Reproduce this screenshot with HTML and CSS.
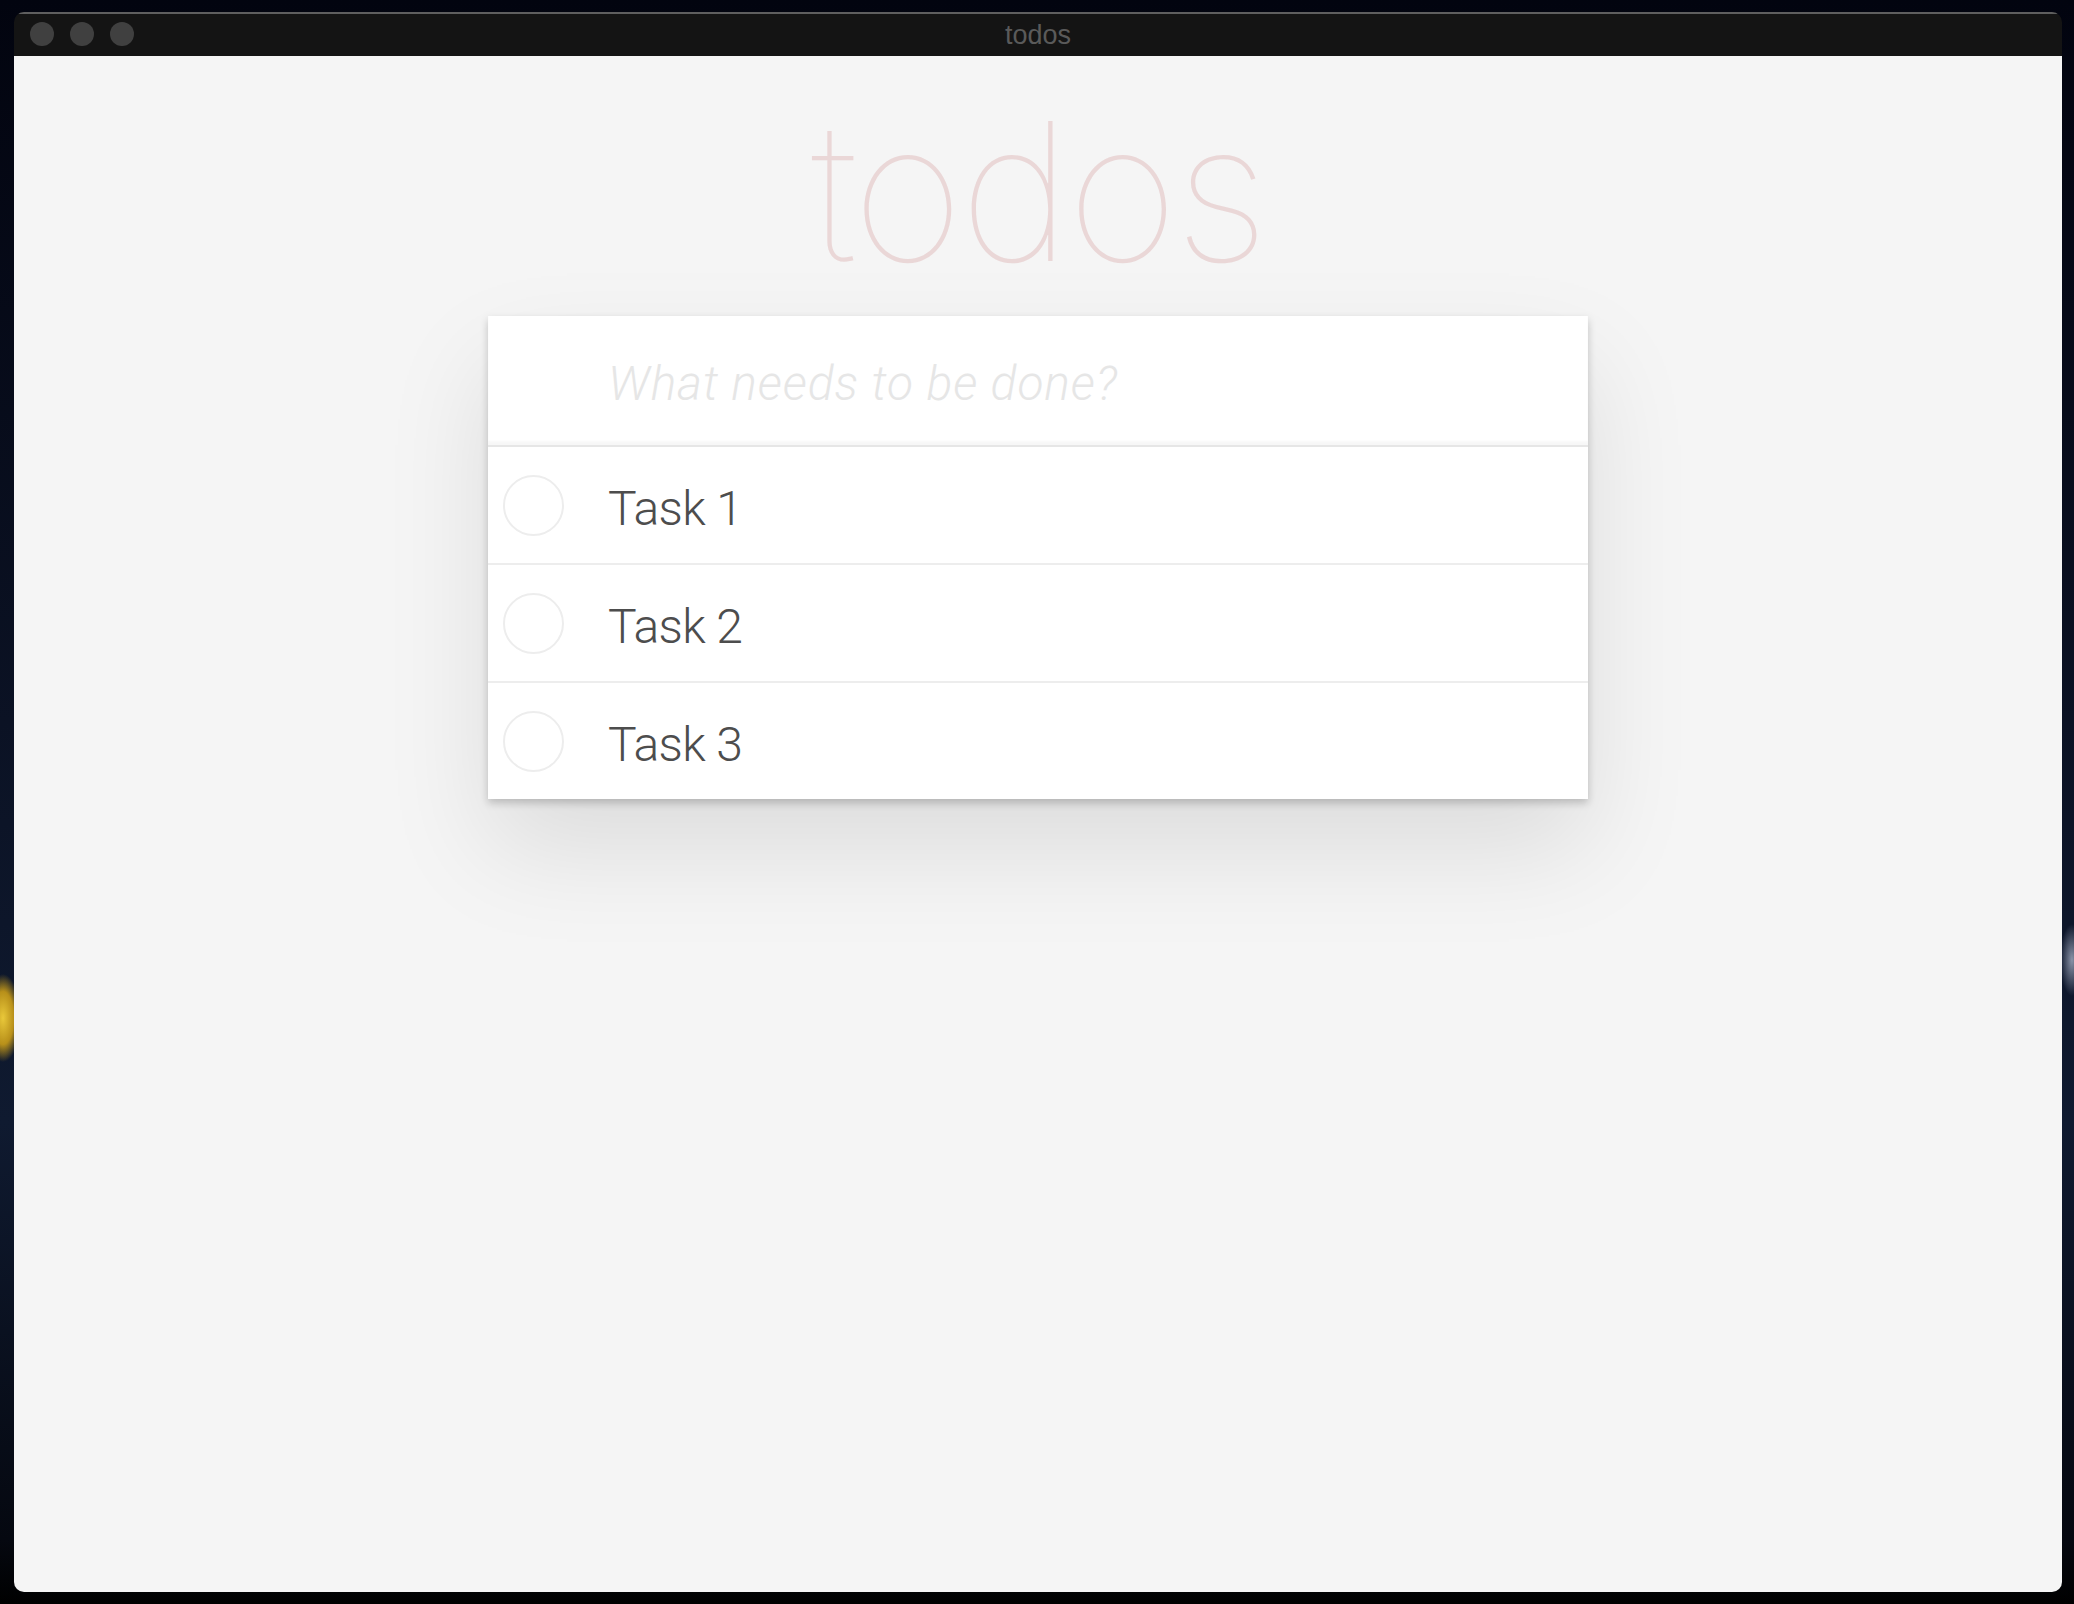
FILE: index.html
```html
<!DOCTYPE html>
<html lang="en">
<head>
<meta charset="utf-8">
<title>todos</title>
<link rel="stylesheet" href="styles.css">
</head>
<body>
<div class="window">
  <div class="titlebar">
    <div class="lights">
      <span class="light"></span>
      <span class="light"></span>
      <span class="light"></span>
    </div>
    <div class="wintitle">todos</div>
  </div>
  <div class="content">
    <section class="todoapp">
      <header class="header">
        <h1 class="logo">todos</h1>
      </header>
      <div class="card">
        <input class="new-todo" type="text" placeholder="What needs to be done?">
        <ul class="todo-list">
          <li class="todo"><span class="toggle"></span><label class="label">Task 1</label></li>
          <li class="todo"><span class="toggle"></span><label class="label">Task 2</label></li>
          <li class="todo"><span class="toggle"></span><label class="label">Task 3</label></li>
        </ul>
      </div>
    </section>
  </div>
</div>
</body>
</html>
```

FILE: styles.css
```css
html, body {
  margin: 0;
  padding: 0;
}

body {
  width: 2074px;
  height: 1604px;
  box-sizing: border-box;
  padding: 12px 12px 0 14px;
  overflow: hidden;
  background:
    radial-gradient(ellipse 18px 44px at 3px 1018px, #e9c83a 0%, #b8901a 60%, rgba(160,120,20,0) 100%),
    radial-gradient(ellipse 12px 36px at 2072px 960px, #8a93a8 0%, rgba(120,130,150,0) 100%),
    linear-gradient(to bottom, #02040f 0%, #0b1224 45%, #0f1a30 70%, #050810 96%, #000000 100%);
  font-family: "Liberation Sans", Arial, sans-serif;
}

.window {
  width: 2048px;
  height: 1580px;
  border-radius: 10px;
  overflow: hidden;
  display: flex;
  flex-direction: column;
}

.titlebar {
  height: 44px;
  flex: none;
  box-sizing: border-box;
  border-top: 2px solid #5f5f5f;
  background: #141414;
  display: flex;
  align-items: center;
  position: relative;
}

.lights {
  display: flex;
  gap: 16px;
  padding-left: 16px;
  margin-top: -2px;
}

.light {
  width: 24px;
  height: 24px;
  border-radius: 50%;
  background: #404040;
}

.wintitle {
  position: absolute;
  left: 0;
  right: 0;
  top: 3px;
  text-align: center;
  font-family: "Liberation Sans", Arial, sans-serif;
  font-size: 27px;
  line-height: 36px;
  color: #5a5a5a;
}

.content {
  flex: 1;
  background: #f5f5f5;
}

.todoapp {
  width: 1100px;
  margin: 0 auto;
}

.header {
  height: 260px;
}

.logo {
  margin: 0;
  padding-top: 25px;
  font-family: "Inter", "Roboto", sans-serif;
  font-weight: 100;
  font-size: 192px;
  line-height: 220px;
  text-align: center;
  color: rgba(175, 47, 47, 0.15);
  letter-spacing: -4px;
}

.card {
  background: #ffffff;
  box-shadow: 0 4px 8px 0 rgba(0, 0, 0, 0.2), 0 50px 100px 0 rgba(0, 0, 0, 0.1);
}

.new-todo {
  display: block;
  width: 100%;
  height: 129px;
  box-sizing: border-box;
  margin: 0;
  padding: 6px 32px 0 120px;
  border: none;
  outline: none;
  background: #ffffff;
  box-shadow: inset 0 -4px 2px rgba(0, 0, 0, 0.03);
  font-family: "Roboto", "Liberation Sans", sans-serif;
  font-weight: 300;
  font-size: 48px;
  color: #4d4d4d;
}

.new-todo::placeholder {
  font-style: italic;
  font-weight: 300;
  letter-spacing: 0.9px;
  color: #e6e6e6;
}

.todo-list {
  list-style: none;
  margin: 0;
  padding: 0;
  border-top: 2px solid #e6e6e6;
}

.todo {
  height: 116px;
  display: flex;
  align-items: center;
  padding-left: 15px;
  border-bottom: 2px solid #ededed;
}

.todo:last-child {
  border-bottom: none;
}

.toggle {
  width: 61px;
  height: 61px;
  box-sizing: border-box;
  border-radius: 50%;
  border: 2px solid #ededed;
  flex: none;
}

.label {
  margin-left: 44px;
  padding-top: 7px;
  font-family: "Roboto", "Liberation Sans", sans-serif;
  font-weight: 300;
  font-size: 48px;
  letter-spacing: -0.6px;
  color: #4d4d4d;
}
```
